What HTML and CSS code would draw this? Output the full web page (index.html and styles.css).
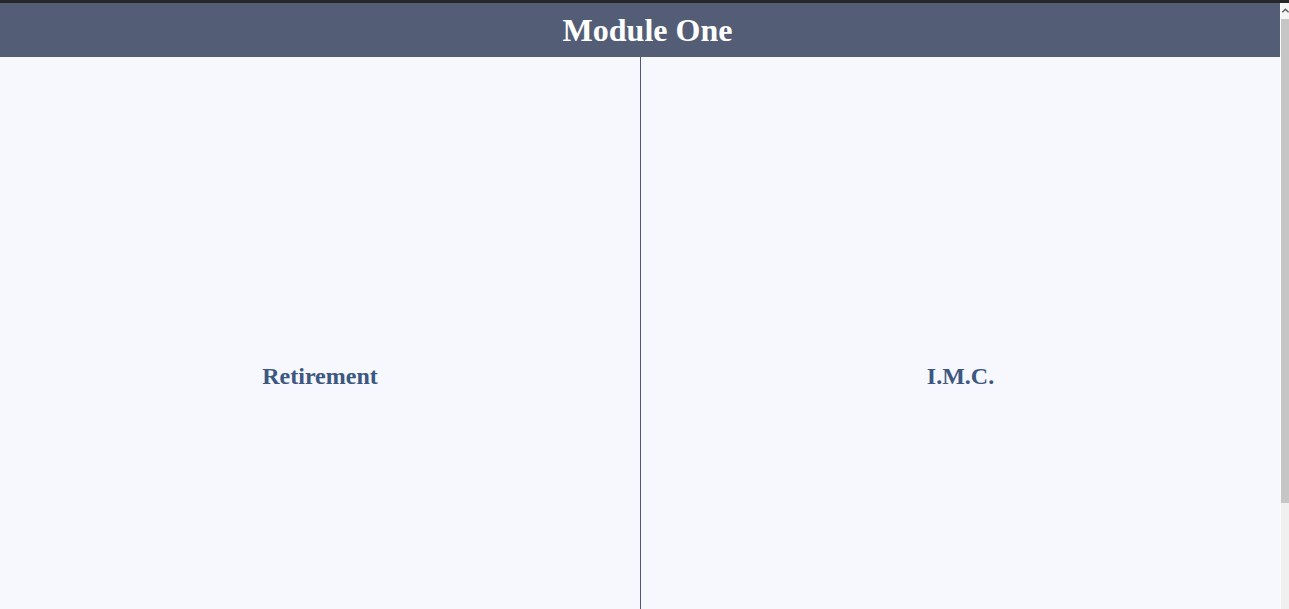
FILE: index.html
```html
<!DOCTYPE html>
<html lang="en">
<head>
<meta charset="utf-8">
<title>Module One</title>
<link rel="stylesheet" href="styles.css">
</head>
<body>
<div class="page">
  <header class="topbar">
    <h1 class="title">Module One</h1>
  </header>
  <main class="panels">
    <section class="panel panel-left">
      <h2 class="panel-label">Retirement</h2>
    </section>
    <section class="panel panel-right">
      <h2 class="panel-label">I.M.C.</h2>
    </section>
  </main>
</div>
<div class="scrollbar" aria-hidden="true">
  <div class="scroll-btn">
    <svg width="9" height="16" viewBox="0 0 9 16"><path d="M1.5 9.5 L5 6 L8.5 9.5" fill="none" stroke="#5a5a5a" stroke-width="1.6"/></svg>
  </div>
  <div class="scroll-thumb"></div>
  <div class="scroll-track"></div>
</div>
</body>
</html>
```

FILE: styles.css
```css
html {
  margin: 0;
  background: #f7f8fd;
}

body {
  margin: 0;
  height: 609px;
  overflow: hidden;
  box-sizing: border-box;
  border-top: 3px solid #262626;
  display: flex;
  font-family: "Liberation Serif", "Times New Roman", serif;
  background: #f7f8fd;
}

.page {
  width: 1280px;
  flex: none;
}

.topbar {
  height: 54px;
  background: #535e76;
  display: flex;
  align-items: center;
  justify-content: center;
  padding-left: 15px;
}

.title {
  margin: 0;
  font-size: 32px;
  font-weight: bold;
  color: #ffffff;
  line-height: 1;
}

.panels {
  display: flex;
  height: 638px;
}

.panel {
  display: flex;
  align-items: center;
  justify-content: center;
  box-sizing: border-box;
}

.panel-left {
  width: 641px;
  border-right: 1px solid #4d5872;
}

.panel-right {
  flex: 1;
}

.panel-label {
  margin: 0;
  font-size: 24px;
  font-weight: bold;
  color: #3c5780;
}

.scrollbar {
  width: 9px;
  flex: none;
  display: flex;
  flex-direction: column;
  background: #f0f0f0;
  border-left: 1px solid #fbfbfb;
  box-sizing: border-box;
}

.scroll-btn {
  height: 16px;
  background: #f5f5f5;
  display: flex;
  justify-content: center;
}

.scroll-btn svg {
  display: block;
}

.scroll-thumb {
  height: 484px;
  background: #c6c6c6;
}

.scroll-track {
  flex: 1;
  background: #f0f0f0;
}
```
